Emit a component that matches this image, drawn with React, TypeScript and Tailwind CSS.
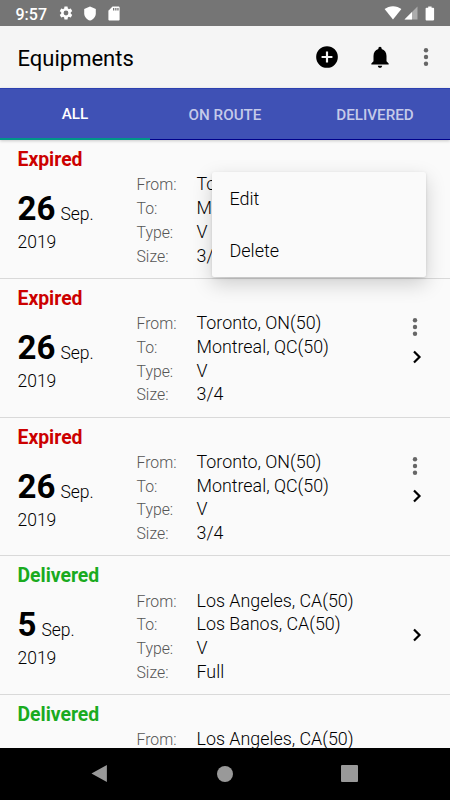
import React from 'react';

type Shipment = {
  status: 'Expired' | 'Delivered';
  day: string;
  month: string;
  year: string;
  from: string;
  to: string;
  type: string;
  size: string;
  hasMenu: boolean;
};

const shipments: Shipment[] = [
  { status: 'Expired', day: '26', month: 'Sep.', year: '2019', from: 'Toronto, ON(50)', to: 'Montreal, QC(50)', type: 'V', size: '3/4', hasMenu: true },
  { status: 'Expired', day: '26', month: 'Sep.', year: '2019', from: 'Toronto, ON(50)', to: 'Montreal, QC(50)', type: 'V', size: '3/4', hasMenu: true },
  { status: 'Expired', day: '26', month: 'Sep.', year: '2019', from: 'Toronto, ON(50)', to: 'Montreal, QC(50)', type: 'V', size: '3/4', hasMenu: true },
  { status: 'Delivered', day: '5', month: 'Sep.', year: '2019', from: 'Los Angeles, CA(50)', to: 'Los Banos, CA(50)', type: 'V', size: 'Full', hasMenu: false },
  { status: 'Delivered', day: '5', month: 'Sep.', year: '2019', from: 'Los Angeles, CA(50)', to: 'Los Banos, CA(50)', type: 'V', size: 'Full', hasMenu: false },
];

const tabs = ['ALL', 'ON ROUTE', 'DELIVERED'];

const MoreIcon: React.FC = () => (
  <svg width="6" height="20" viewBox="0 0 6 20" fill="#666666">
    <circle cx="3" cy="3.3" r="2.2" />
    <circle cx="3" cy="10" r="2.2" />
    <circle cx="3" cy="16.7" r="2.2" />
  </svg>
);

const StatusBar: React.FC = () => (
  <div className="flex h-[26px] shrink-0 items-center bg-[#757575] pl-[15.5px] pr-[15px] text-white">
    <span className="w-[41px] pt-[3px] text-[16px] font-medium leading-none">9:57</span>
    <svg className="ml-px" width="16" height="16" viewBox="0 0 24 24" fill="currentColor">
      <path d="M19.14 12.94c.04-.3.06-.61.06-.94s-.02-.64-.07-.94l2.03-1.58a.49.49 0 0 0 .12-.61l-1.92-3.32a.488.488 0 0 0-.59-.22l-2.39.96c-.5-.38-1.03-.7-1.62-.94l-.36-2.54a.484.484 0 0 0-.48-.41h-3.84c-.24 0-.43.17-.47.41l-.36 2.54c-.59.24-1.13.57-1.62.94l-2.39-.96c-.22-.08-.47 0-.59.22L2.74 8.87c-.12.21-.08.47.12.61l2.03 1.58c-.05.3-.09.63-.09.94s.02.64.07.94l-2.03 1.58a.49.49 0 0 0-.12.61l1.92 3.32c.12.22.37.29.59.22l2.39-.96c.5.38 1.03.7 1.62.94l.36 2.54c.05.24.24.41.48.41h3.84c.24 0 .44-.17.47-.41l.36-2.54c.59-.24 1.13-.56 1.62-.94l2.39.96c.22.08.47 0 .59-.22l1.92-3.32c.12-.22.07-.47-.12-.61zM12 15.6A3.6 3.6 0 1 1 12 8.4a3.6 3.6 0 0 1 0 7.2z" />
    </svg>
    <svg className="ml-[9px]" width="14" height="15" viewBox="0 0 14 15" fill="currentColor">
      <path d="M7 .5 1.2 2.9v4.3c0 3.5 2.4 6.3 5.8 7.4 3.4-1.1 5.8-3.9 5.8-7.4V2.9z" />
    </svg>
    <svg className="ml-[11px]" width="12" height="15" viewBox="0 0 12 15">
      <path d="M4.5.5h6c.6 0 1.1.5 1.1 1.1v11.8c0 .6-.5 1.1-1.1 1.1h-9c-.6 0-1.1-.5-1.1-1.1V4.7z" fill="currentColor" />
      <path d="M5 2h1.3v2.5H5zM7.2 2h1.3v2.5H7.2zM9.3 2h1.3v2.5H9.3z" fill="#757575" />
    </svg>
    <svg className="ml-auto" width="18" height="14" viewBox="0 0 18 14" fill="currentColor">
      <path d="M9 13.5.6 3.1C2.9 1.2 5.8.2 9 .2s6.1 1 8.4 2.9z" />
    </svg>
    <svg className="ml-[2px]" width="14" height="14" viewBox="0 0 14 14" fill="currentColor">
      <path d="M13.5.5v13H.5z" opacity=".4" />
      <path d="M8 6v7.5H.5z" />
    </svg>
    <svg className="ml-[7px]" width="10" height="15" viewBox="0 0 10 15" fill="currentColor">
      <path d="M3.2.4h3.4v1.3h1.6c.5 0 .9.4.9.9v11c0 .5-.4.9-.9.9H1.5c-.5 0-.9-.4-.9-.9v-11c0-.5.4-.9.9-.9h1.7z" />
    </svg>
  </div>
);

const AppBar: React.FC = () => (
  <header className="flex h-[62px] shrink-0 items-center bg-[#f5f5f5] pl-[17.5px] pr-[21px]">
    <h1 className="mt-[2px] text-[22px] font-normal text-black">Equipments</h1>
    <svg className="mb-px ml-auto" width="26" height="26" viewBox="0 0 24 24">
      <path d="M12 2a10 10 0 1 0 0 20 10 10 0 0 0 0-20zm5 11h-4v4h-2v-4H7v-2h4V7h2v4h4z" />
    </svg>
    <svg className="mb-px ml-[27px]" width="26" height="26" viewBox="0 0 24 24">
      <path d="M12 22c1.1 0 2-.9 2-2h-4c0 1.1.89 2 2 2zm6-6v-5c0-3.07-1.64-5.64-4.5-6.32V4c0-.83-.67-1.5-1.5-1.5s-1.5.67-1.5 1.5v.68C7.63 5.36 6 7.92 6 11v5l-2 2v1h16v-1z" />
    </svg>
    <div className="ml-[30px]">
      <MoreIcon />
    </div>
  </header>
);

const TabBar: React.FC = () => (
  <nav className="relative z-10 grid h-[52px] shrink-0 grid-cols-3 border-t border-[#2c40b0] bg-[#3f51b5] shadow-[0_1px_3px_rgba(0,0,0,0.2)]">
    {tabs.map((tab, index) => (
      <div
        key={tab}
        className={`flex items-center justify-center text-[15.2px] font-medium ${
          index === 0
            ? 'border-b-2 border-[#009688] pt-[2px] text-white'
            : 'border-b border-[#00008b] pt-[2px] text-[#c5cae9]'
        }`}
      >
        {tab}
      </div>
    ))}
  </nav>
);

const ShipmentRow: React.FC<{ shipment: Shipment }> = ({ shipment }) => {
  const details = [
    { label: 'From:', value: shipment.from },
    { label: 'To:', value: shipment.to },
    { label: 'Type:', value: shipment.type },
    { label: 'Size:', value: shipment.size },
  ];

  return (
    <div className="flex h-[138.8px] shrink-0 border-b border-[#d9d9d9] pl-[17.5px]">
      <div className="w-[119px]">
        <div
          className={`mt-[8px] text-[19.4px] font-bold leading-6 tracking-[-0.02px] ${
            shipment.status === 'Expired' ? 'text-[#cc0000]' : 'text-[#1aab1f]'
          }`}
        >
          {shipment.status}
        </div>
        <div className="mt-[17px] flex h-[40px] items-baseline gap-[5px] leading-[40px]">
          <span className="text-[33px] font-bold">{shipment.day}</span>
          <span className="text-[17.5px] font-light">{shipment.month}</span>
        </div>
        <div className="mt-px text-[17.5px] font-light leading-6">{shipment.year}</div>
      </div>
      <div className="flex-1 pt-[32.2px]">
        {details.map((item) => (
          <div key={item.label} className="flex h-[23.8px] items-baseline leading-[24px]">
            <span className="w-[60px] text-[15.8px] font-light text-[#555555]">{item.label}</span>
            <span className="text-[17.85px] font-light text-black">{item.value}</span>
          </div>
        ))}
      </div>
      <div className="flex w-[42px] flex-col pt-[38px]">
        <div className="ml-[4px] h-5">
          {shipment.hasMenu && <MoreIcon />}
        </div>
        <svg className="mt-[13.5px] ml-[4px]" width="10" height="14" viewBox="0 0 10 14" fill="none" stroke="black" strokeWidth="2.2">
          <path d="m2 1.500 5.500 5.500L2 12.500" />
        </svg>
      </div>
    </div>
  );
};

const PopupMenu: React.FC = () => (
  <div className="absolute left-[212px] top-[172px] z-20 flex h-[105px] w-[214px] flex-col rounded-[2px] bg-[#fafafa] text-[18px] font-light shadow-[0_7px_20px_rgba(0,0,0,0.18),0_1px_3px_rgba(0,0,0,0.12)]">
    <div className="flex h-[52px] items-center pl-[17.5px]">Edit</div>
    <div className="flex h-[53px] items-center pl-[17.5px]">Delete</div>
  </div>
);

const NavigationBar: React.FC = () => (
  <div className="grid h-[52px] shrink-0 grid-cols-[199px_51px_1fr] items-center bg-black">
    <svg className="ml-[91px]" width="17" height="20" viewBox="0 0 17 20" fill="#999999">
      <path d="M15.9 1v17L.5 9.5z" />
    </svg>
    <div className="mb-px ml-[18px] size-4 rounded-full bg-[#999999]" />
    <div className="mb-px ml-[91px] size-[17px] rounded-[1px] bg-[#999999]" />
  </div>
);

const App: React.FC = () => {
  return (
    <div className="relative flex h-[800px] w-[450px] flex-col overflow-hidden bg-[#fafafa] font-[Roboto,sans-serif] text-black">
      <StatusBar />
      <AppBar />
      <TabBar />
      <main className="flex min-h-0 flex-1 flex-col overflow-hidden">
        {shipments.map((shipment, index) => (
          <ShipmentRow key={index} shipment={shipment} />
        ))}
      </main>
      <PopupMenu />
      <NavigationBar />
    </div>
  );
};

export default App;
